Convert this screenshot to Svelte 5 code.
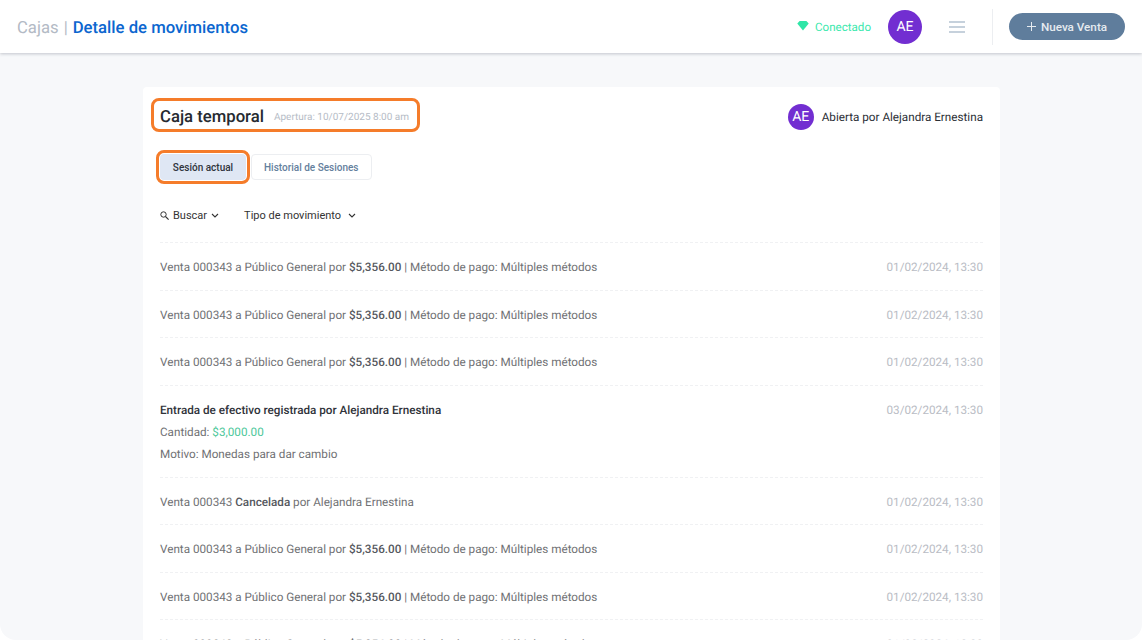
<script>
  const sale = { text: "Venta 000343 a Público General por ", amount: "$5,356.00", rest: " | Método de pago: Múltiples métodos", date: "01/02/2024, 13:30" };
  const before = [sale, sale, sale];
  const after = [sale, sale];
</script>

{#snippet saleRow(r)}
  <li class="row">
    <span>{r.text}<b>{r.amount}</b>{r.rest}</span>
    <time>{r.date}</time>
  </li>
{/snippet}

<div class="page">
  <header class="topbar">
    <h1><span class="crumb">Cajas</span><span class="sep">|</span><span class="current">Detalle de movimientos</span></h1>
    <div class="actions">
      <span class="status">
        <svg width="12" height="10" viewBox="0 0 12 10"><path d="M0.3 2.6 2.6 0h6.8l2.3 2.6L6 9.6z" fill="#2fe6a7" /></svg>
        Conectado
      </span>
      <span class="avatar big">AE</span>
      <button class="menu" aria-label="menu">
        <svg width="16" height="12" viewBox="0 0 16 12"><path d="M0 1h16M0 6h16M0 11h16" stroke="#b4c2d1" stroke-width="1.5" /></svg>
      </button>
      <span class="vr"></span>
      <button class="new">
        <svg width="9" height="9" viewBox="0 0 9 9"><path d="M4.5 0v9M0 4.5h9" stroke="#e6ebf0" stroke-width="1" /></svg>
        Nueva Venta
      </button>
    </div>
  </header>

  <main>
    <section class="card">
      <div class="head">
        <div class="title mark">
          <h2>Caja temporal</h2>
          <small>Apertura: 10/07/2025 8:00 am</small>
        </div>
        <div class="owner">
          <span class="avatar">AE</span>
          Abierta por Alejandra Ernestina
        </div>
      </div>

      <div class="tabs">
        <button class="tab active">Sesión actual</button>
        <button class="tab">Historial de Sesiones</button>
      </div>

      <div class="filters">
        <button class="filter">
          <svg class="search" width="9" height="9" viewBox="0 0 9 9"><circle cx="3.5" cy="3.5" r="2.7" fill="none" stroke="#333" stroke-width="1" /><path d="M5.5 5.5 8.6 8.6" stroke="#333" stroke-width="1.1" /></svg>
          Buscar
          <svg width="8" height="5" viewBox="0 0 8 5"><path d="M1 1l3 3 3-3" fill="none" stroke="#333" stroke-width="1.1" /></svg>
        </button>
        <button class="filter wide">
          Tipo de movimiento
          <svg width="8" height="5" viewBox="0 0 8 5"><path d="M1 1l3 3 3-3" fill="none" stroke="#333" stroke-width="1.1" /></svg>
        </button>
      </div>

      <ul class="moves">
        {#each before as r}
          {@render saleRow(r)}
        {/each}
        <li class="row entry">
          <div>
            <strong>Entrada de efectivo registrada por Alejandra Ernestina</strong>
            <p>Cantidad: <em>$3,000.00</em></p>
            <p>Motivo: Monedas para dar cambio</p>
          </div>
          <time>03/02/2024, 13:30</time>
        </li>
        <li class="row">
          <span>Venta 000343 <b>Cancelada</b> por Alejandra Ernestina</span>
          <time>01/02/2024, 13:30</time>
        </li>
        {#each after as r}
          {@render saleRow(r)}
        {/each}
        {@render saleRow(sale)}
      </ul>
    </section>
  </main>
</div>

<style>
  :global(body) {
    margin: 0;
    background: #fff;
  }
  .page {
    height: 640px;
    overflow: hidden;
    background: #f7f8fa;
    border-radius: 0 0 16px 16px;
    font-family: Roboto, "Liberation Sans", sans-serif;
    text-rendering: geometricPrecision;
    color: #333;
    display: flex;
    flex-direction: column;
  }
  button {
    font: inherit;
    background: none;
    border: none;
    padding: 0;
    color: inherit;
  }
  .topbar {
    flex: none;
    height: 53px;
    box-sizing: border-box;
    background: #fff;
    box-shadow: 0 1px 3px rgba(60, 70, 85, 0.28);
    display: flex;
    align-items: center;
    justify-content: space-between;
    padding: 0 17px 0 17px;
    position: relative;
  }
  h1 {
    margin: 0;
    padding-top: 3px;
    font-size: 16.7px;
    font-weight: 400;
    display: flex;
    gap: 5px;
  }
  .crumb,
  .sep {
    color: #b3bac5;
  }
  .current {
    color: #0b66cf;
    font-weight: 500;
  }
  .actions {
    display: flex;
    align-items: center;
  }
  .status {
    display: flex;
    align-items: center;
    gap: 6px;
    font-size: 11.6px;
    color: #3be8ad;
    margin-right: 17px;
    padding-top: 1px;
  }
  .status svg {
    margin-top: -2px;
  }
  .avatar {
    width: 26px;
    height: 26px;
    border-radius: 50%;
    background: #722ed1;
    color: #fff;
    display: flex;
    align-items: center;
    justify-content: center;
    font-size: 14px;
  }
  .avatar.big {
    width: 34px;
    height: 34px;
    font-size: 14px;
  }
  .menu {
    display: flex;
    margin: 0 0 0 27px;
  }
  .vr {
    width: 1px;
    height: 36px;
    background: #eceef1;
    margin: 0 16px 0 27px;
  }
  .new {
    width: 116px;
    height: 27px;
    border-radius: 14px;
    background: #5f7d9c;
    color: #e6ebf0;
    font-size: 11.7px;
    font-weight: 500;
    display: flex;
    align-items: center;
    justify-content: center;
    gap: 5px;
  }
  main {
    flex: 1;
    min-height: 0;
    padding: 34px 142px 0 143px;
  }
  .card {
    background: #fff;
    border-radius: 4px 4px 0 0;
    padding: 11px 17px 0;
    height: 100%;
    box-sizing: border-box;
  }
  .head {
    display: flex;
    align-items: center;
    justify-content: space-between;
  }
  .mark {
    border: 3px solid #f57c2a;
    border-radius: 8px;
    box-sizing: border-box;
  }
  .title {
    display: flex;
    align-items: center;
    gap: 10px;
    margin-left: -9px;
    width: 269px;
    height: 34px;
    padding: 4px 6px 0;
  }
  h2 {
    margin: 0;
    font-size: 16.7px;
    font-weight: 500;
    color: #262a30;
    white-space: nowrap;
  }
  small {
    font-size: 10px;
    color: #b6bcc6;
    white-space: nowrap;
    padding-top: 1px;
  }
  .owner {
    display: flex;
    align-items: center;
    gap: 8px;
    font-size: 11.7px;
    color: #2b2f36;
    padding-top: 3px;
  }
  .tabs {
    display: flex;
    align-items: center;
    gap: 1px;
    margin-top: 18px;
    margin-left: -4px;
  }
  .tab {
    height: 26px;
    padding: 0 12px;
    border: 1px solid #eceef1;
    border-radius: 4px;
    font-size: 10px;
    font-weight: 500;
    color: #64809d;
    background: #fff;
  }
  .tab.active {
    width: 94px;
    height: 34px;
    padding: 0;
    border: 3px solid #f57c2a;
    border-radius: 8px;
    box-sizing: border-box;
    background: #dfe7f4;
    box-shadow: inset 0 0 0 1px #fff;
    color: #30353c;
  }
  .filters {
    display: flex;
    align-items: center;
    gap: 25px;
    margin-top: 15px;
    height: 32px;
    font-size: 11px;
    color: #333;
  }
  .filter {
    display: flex;
    align-items: center;
    gap: 4px;
  }
  .filter.wide {
    gap: 7px;
  }
  .search {
    margin-right: 0;
  }
  .moves {
    list-style: none;
    margin: 11px 0 0;
    padding: 0;
  }
  .row {
    display: flex;
    justify-content: space-between;
    align-items: center;
    height: 47.5px;
    box-sizing: border-box;
    border-top: 1px dashed #f0f1f3;
    padding-top: 2px;
    font-size: 11.7px;
    color: #707174;
  }
  .row b {
    font-weight: 500;
    color: #55585e;
  }
  time {
    color: #b9bcc4;
  }
  .entry {
    height: 92px;
    align-items: flex-start;
    padding-top: 17px;
  }
  .entry strong {
    display: block;
    font-weight: 500;
    color: #30333a;
  }
  .entry p {
    margin: 8px 0 0;
  }
  .entry em {
    font-style: normal;
    color: #4cc79a;
  }
</style>
